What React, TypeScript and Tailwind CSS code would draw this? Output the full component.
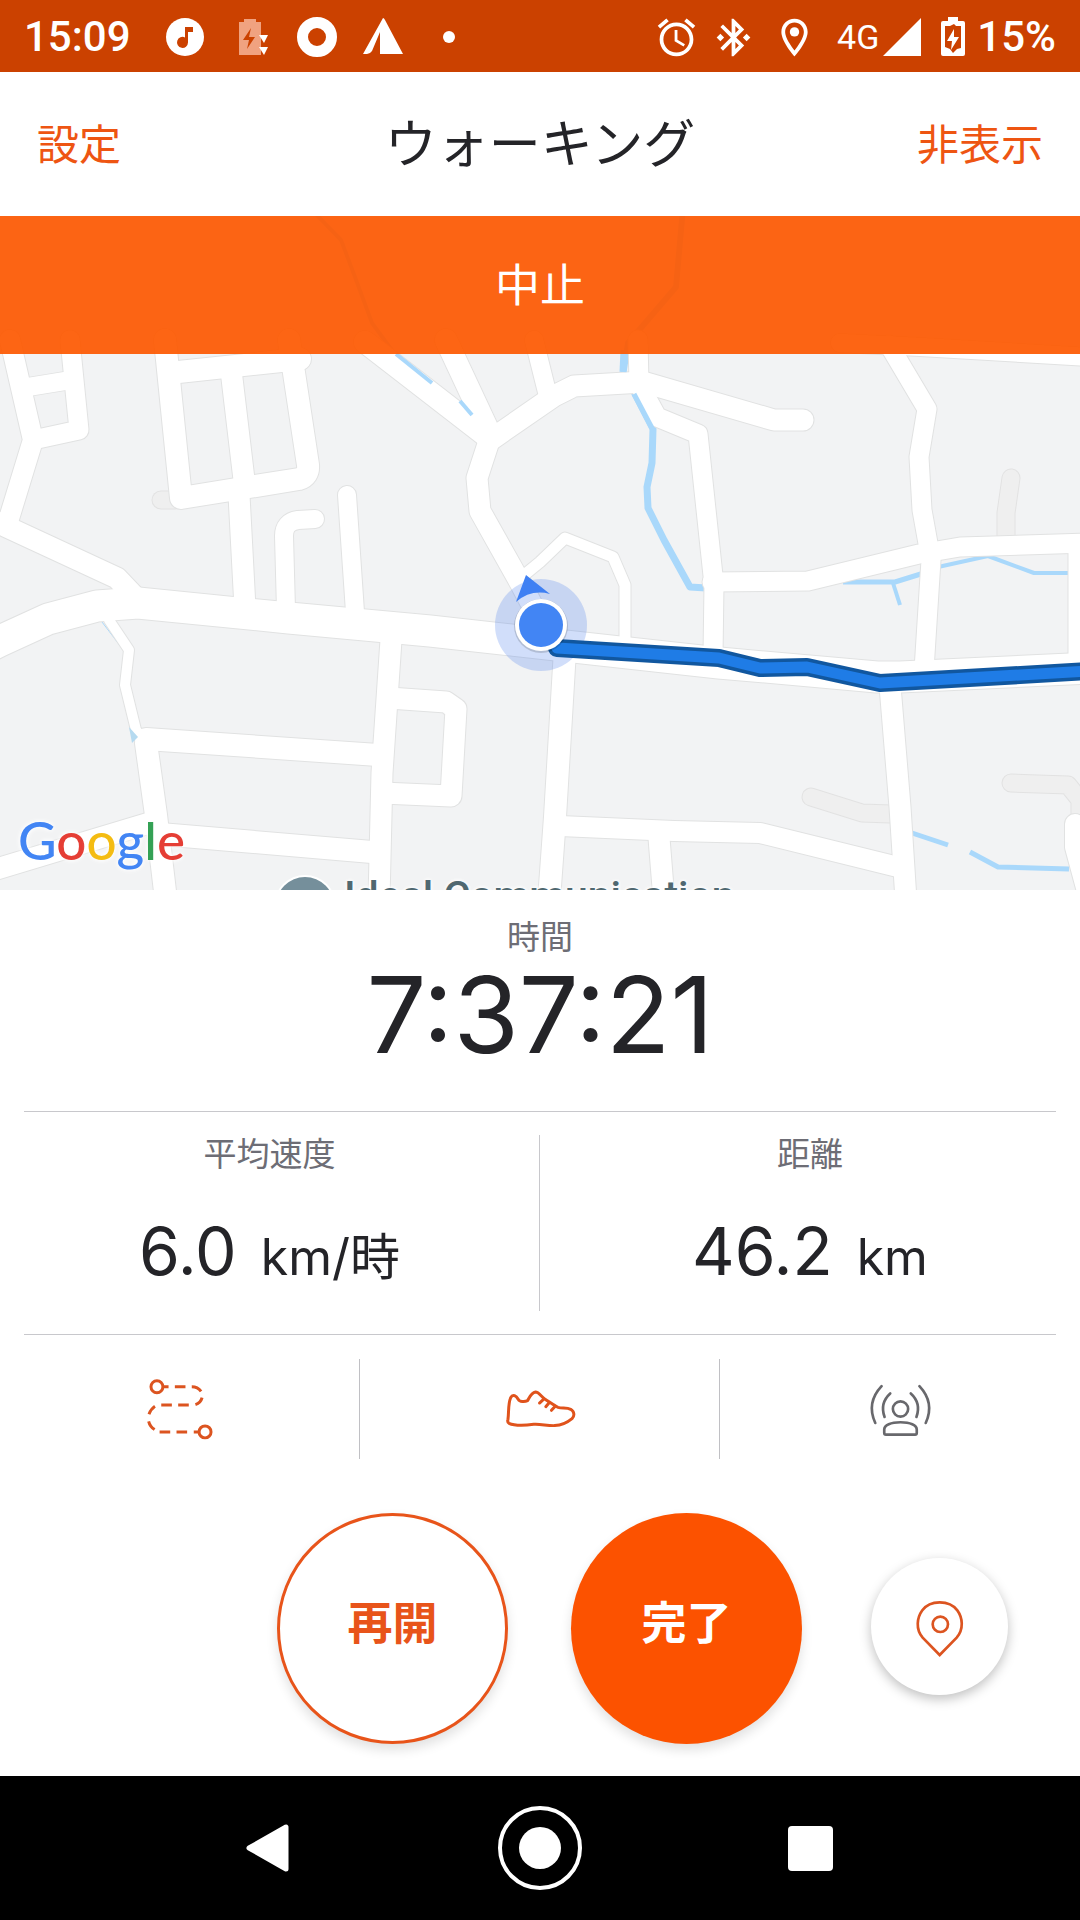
import type { ReactNode } from "react";
import { MdAlarm, MdBluetoothConnected, MdOutlineLocationOn } from "react-icons/md";

type Road = { d: string; w: number };

const roads: Road[] = [
  // main road
  { d: "M-10 646 L0 641 L48 619 L97 606 L138 603 L289 618 L430 631 L574 647 L719 663 L877 677 L900 677 L1090 668", w: 31 },
  // north west
  { d: "M10 340 L33 440 L7 525", w: 20 },
  { d: "M-10 519 L7 527 L117 578 L136 598", w: 21 },
  { d: "M28 387 L71 380", w: 18 },
  { d: "M70 340 L79 430 L33 440", w: 19 },
  { d: "M165 340 L181 498 L299 479 Q309 476 308 465 L289 340", w: 22 },
  { d: "M169 373 L300 359", w: 22 },
  { d: "M231 370 L245 488", w: 21 },
  { d: "M239 495 L245 608", w: 21 },
  { d: "M315 519 L298 520 Q284 522 284 536 L286 610", w: 18 },
  { d: "M347 495 L355 612", w: 18 },
  { d: "M365 342 L489 438", w: 22 },
  { d: "M446 340 L489 432", w: 22 },
  { d: "M490 438 L477 478 L480 511 L522 586 L540 620", w: 21 },
  { d: "M489 441 L554 396 L574 386 L643 382 L774 420 L803 420", w: 21 },
  { d: "M534 340 L547 392", w: 18 },
  { d: "M638 340 L639 384 L657 417 L698 434 L714 585 L713 655", w: 19 },
  { d: "M518 580 L540 562 L565 538 L613 557 L625 585 L625 645", w: 11 },
  // north east
  { d: "M840 343 L920 347 L1090 357", w: 18 },
  { d: "M889 345 L927 409 L919 457 L922 510 L931 560 L924 670", w: 19 },
  { d: "M712 582 L808 581 L919 554 L960 547 L1090 543", w: 19 },
  { d: "M1077 546 L1077 662", w: 17 },
  // south west
  { d: "M109 620 L129 650 L125 685 L136 730 L146 743", w: 10 },
  { d: "M146 743 L156 815 L166 900", w: 22 },
  { d: "M146 739 L378 755", w: 22 },
  { d: "M160 834 L372 852", w: 22 },
  { d: "M-10 871 L156 821", w: 21 },
  { d: "M391 640 L382 773 L379 900", w: 21 },
  { d: "M389 698 L446 702 L456 709 L451 796 L382 793", w: 21 },
  // south east
  { d: "M565 650 L555 817 L549 900", w: 22 },
  { d: "M560 826 L674 831 L760 833 L898 867", w: 20 },
  { d: "M659 838 L664 900", w: 21 },
  { d: "M890 686 L900 807 L906 900", w: 21 },
  { d: "M1075 824 L1075 847 L1088 895", w: 20 },
];

const lanes = [
  "M161 500 L175 500",
  "M1011 478 L1006 513 L1006 540",
  "M811 797 L862 813 L890 814",
  "M1011 783 L1068 785 L1080 800 L1080 820",
];

const rivers: Road[] = [
  { d: "M310 208 L341 240 L355 277 L372 323 L394 353 L432 383", w: 4 },
  { d: "M683 208 L676 287 L628 343 L623 376", w: 6 },
  { d: "M634 392 L653 429 L652 463 L647 487 L648 508 L664 540 L690 587 L706 588", w: 7 },
  { d: "M843 582 L895 582 L924 573", w: 5 },
  { d: "M893 583 L900 605", w: 4 },
  { d: "M938 567 L988 556 L1034 573 L1069 573", w: 4 },
  { d: "M912 833 L948 845", w: 5 },
  { d: "M970 852 L998 867 L1069 869", w: 5 },
  { d: "M102 622 L128 656", w: 1 },
];

// stretches of water that run on top of the road outlines
const openWater: Road[] = [
  { d: "M396 354 L432 383", w: 4 },
  { d: "M460 401 L472 415", w: 4 },
  { d: "M624 350 L623 372", w: 7 },
  { d: "M634 394 L653 430", w: 5 },
];

const route = "M557 648 L719 658 L760 668 L807 667 L880 683 L1090 671";

function RoadMap() {
  return (
    <svg
      aria-hidden="true"
      viewBox="0 216 1080 674"
      preserveAspectRatio="xMidYMid slice"
      className="absolute inset-0 h-full w-full bg-[#f2f3f4]"
      fill="none"
    >
      {lanes.map((d) => (
        <g key={d} strokeLinecap="round" strokeLinejoin="round">
          <path d={d} stroke="#e2e2e2" strokeWidth="19" />
          <path d={d} stroke="#efefef" strokeWidth="17" />
        </g>
      ))}
      {rivers.map((r) => (
        <path key={r.d} d={r.d} stroke="#a9d8fb" strokeWidth={r.w} strokeLinejoin="round" />
      ))}
      {roads.map((r) => (
        <path key={r.d} d={r.d} stroke="#e1e2e2" strokeWidth={r.w + 2} strokeLinecap="round" strokeLinejoin="round" />
      ))}
      {roads.map((r) => (
        <path key={r.d} d={r.d} stroke="#fff" strokeWidth={r.w} strokeLinecap="round" strokeLinejoin="round" />
      ))}
      <path d="M129 727 L138 737 L132 743Z" fill="#b5daf0" />
      {openWater.map((r) => (
        <path key={r.d} d={r.d} stroke="#a9d8fb" strokeWidth={r.w} />
      ))}

      <circle cx="541" cy="625" r="46" fill="#4f80ea" fillOpacity="0.26" />
      <path d={route} stroke="#11579f" strokeWidth="18" strokeLinejoin="round" strokeLinecap="round" />
      <path d={route} stroke="#1f7ce6" strokeWidth="11" strokeLinejoin="round" strokeLinecap="round" />
      <path d="M526 575 L550 594 Q531 589 516 602Z" fill="#3f80f3" />
      <circle cx="541" cy="626" r="27" fill="#000" fillOpacity="0.15" />
      <circle cx="541" cy="625" r="26" fill="#fff" />
      <circle cx="541" cy="625" r="22" fill="#4285f4" />
      <circle cx="305" cy="906" r="31" fill="#fff" />
      <circle cx="305" cy="906" r="29" fill="#758f9b" />
    </svg>
  );
}

function StatusCell({ children }: { children: ReactNode }) {
  return <span className="flex w-[66px] shrink-0 items-center justify-center">{children}</span>;
}

function StatusBar() {
  return (
    <div className="flex h-[72px] items-center bg-[#cb4100] px-6 pt-0.5 font-[Roboto,sans-serif] text-[42px] leading-[48px] font-medium text-white">
      <span className="w-32">15:09</span>
      <StatusCell>
        <svg width="38" height="38" viewBox="0 0 38 38">
          <circle cx="19" cy="19" r="19" fill="#fff" />
          <path d="M19 9h8v5h-5v10.500a5.500 5.500 0 1 1-3-5z" fill="#cb4100" />
        </svg>
      </StatusCell>
      <StatusCell>
        <svg width="36" height="38" viewBox="0 0 36 38">
          <path d="M6 4h5V1h12v3h5v33H6z" fill="#f0a280" />
          <path d="M18 10 10 22h6l-2 9 8-12h-6z" fill="#cb4100" />
          <path d="M26 17h9l-4 8zM26 29h9l-4 8z" fill="#fff" />
        </svg>
      </StatusCell>
      <StatusCell>
        <svg width="40" height="40" viewBox="0 0 40 40">
          <circle cx="20" cy="20" r="14.500" fill="none" stroke="#fff" strokeWidth="11" />
        </svg>
      </StatusCell>
      <StatusCell>
        <svg width="40" height="38" viewBox="0 0 40 38">
          <path d="M20 0 Q21 0 22 2 L40 36 H17 V14 L9 33 Q7 36 4 36 H0 Z" fill="#fff" />
        </svg>
      </StatusCell>
      <StatusCell>
        <svg width="12" height="12" viewBox="0 0 12 12">
          <circle cx="6" cy="6" r="6" fill="#fff" />
        </svg>
      </StatusCell>
      <div className="ml-auto flex items-center">
        <MdAlarm size={45} />
        <MdBluetoothConnected size={45} className="ml-3" />
        <MdOutlineLocationOn size={45} className="ml-4" />
        <span className="ml-5 text-[34px] font-normal">4G</span>
        <svg width="38" height="38" viewBox="0 0 38 38" className="ml-1">
          <path d="M38 0v38H0z" fill="#fff" />
        </svg>
        <svg width="24" height="40" viewBox="0 0 24 40" className="mr-3 ml-5">
          <path d="M7 0h10v4h5q2 0 2 2v31q0 2-2 2H2q-2 0-2-2V6q0-2 2-2h5z" fill="#fff" />
          <path d="M4 9h5l4-2 2 2h5v22l-4 1-4 4-3-4-5-2z" fill="#cb4100" />
          <path d="M13 12 6 24h5l-1 9 8-13h-5z" fill="#fff" />
        </svg>
        <span>15%</span>
      </div>
    </div>
  );
}

function Stat({ label, value, unit }: { label: string; value: string; unit: string }) {
  return (
    <div className="flex h-44 flex-col items-center">
      <span className="text-[33px] leading-[34px] text-[#6d6d75]">{label}</span>
      <p className="mt-11 font-[Inter,'Noto_Sans_CJK_JP',sans-serif] text-[66px] leading-[76px] whitespace-nowrap text-[#242428]">
        {value}
        <span className="ml-6 text-[50px]">{unit}</span>
      </p>
    </div>
  );
}

function RouteIcon() {
  return (
    <svg width="73" height="70" viewBox="130 100 220 210" fill="none" stroke="#dc5420" strokeWidth="9" strokeLinecap="butt">
      <circle cx="172" cy="138" r="18" />
      <circle cx="317" cy="274" r="18" />
      <path d="M190 138h17M226 138h32M277 138q18 0 28 14M308 171q-4 16-20 21M268 193h-32M217 193h-32M166 197q-12 8-18 24M147 242q4 16 18 25M180 274h32M231 274h32M283 274h16" />
    </svg>
  );
}

function ShoeIcon() {
  return (
    <svg width="73" height="70" viewBox="1210 102 220 210" fill="none" stroke="#e0531c" strokeWidth="9" strokeLinecap="round" strokeLinejoin="round">
      <path d="M1225 238 C1228 215 1225 192 1233 173 C1240 160 1250 168 1256 178 C1260 186 1276 186 1284 182 C1290 172 1295 158 1308 156 C1318 156 1326 170 1336 177 C1350 186 1366 198 1376 202 C1388 206 1402 202 1414 208 C1426 215 1426 228 1418 236 C1406 246 1390 256 1366 257 C1345 258 1325 252 1305 253 C1280 256 1250 260 1228 250 C1222 246 1224 242 1225 238Z" />
      <path d="M1332 178l-12 11M1349 188l-10 12M1366 200l-10 11" />
    </svg>
  );
}

function BeaconIcon() {
  return (
    <svg width="73" height="70" viewBox="790 102 220 210" fill="none" stroke="#68686c" strokeWidth="8" strokeLinecap="round" strokeLinejoin="round">
      <circle cx="900" cy="207" r="23" />
      <path d="M856 284q-5 0-5-5v-10c0-14 20-22 49-22s49 8 49 22v10q0 5-5 5z" />
      <path d="M843 138c-30 32-38 70-19 111M957 138c30 32 38 70 19 111M869 160c-22 20-26 46-17 71M931 160c22 20 26 46 17 71" />
    </svg>
  );
}

const tabs = [
  { label: "ルート", icon: <RouteIcon /> },
  { label: "ウォーキング", icon: <ShoeIcon /> },
  { label: "Beacon", icon: <BeaconIcon /> },
];

export default function App() {
  return (
    <div className="flex min-h-screen flex-col bg-white font-['Noto_Sans_CJK_JP',sans-serif]">
      <StatusBar />

      <header className="grid h-36 grid-cols-[1fr_auto_1fr] items-center px-[37px] pb-1">
        <button className="justify-self-start text-[42px] leading-[48px] text-[#ee5512]">設定</button>
        <h1 className="pb-0.5 text-[52px] leading-[56px] text-[#242428]">ウォーキング</h1>
        <button className="justify-self-end text-[42px] leading-[48px] text-[#ee5512]">非表示</button>
      </header>

      <section className="relative min-h-[400px] flex-1 overflow-hidden">
        <RoadMap />
        <button className="absolute inset-x-0 top-0 h-[138px] bg-[#fd5800]/92 pb-1 text-[45px] text-white">中止</button>
        <span className="absolute bottom-[18px] left-[18px] font-[Lato,sans-serif] text-[53px] leading-[64px] font-medium text-[#4285f4] [text-shadow:0_0_4px_#fff,0_0_6px_#fff]">
          G<span className="text-[#e53e35]">o</span>
          <span className="text-[#f4bc12]">o</span>g<span className="text-[#34a155]">l</span>
          <span className="text-[#e53e35]">e</span>
        </span>
        <span className="absolute -bottom-[30px] left-[344px] font-[Roboto,sans-serif] text-[41px] leading-[48px] font-medium whitespace-nowrap text-[#506870] [text-shadow:0_0_4px_#fff,0_0_4px_#fff]">
          Ideal Communication
        </span>
      </section>

      <section className="flex flex-col items-center px-6 pt-[27px]">
        <span className="text-[33px] leading-9 text-[#6d6d75]">時間</span>
        <p className="mt-[10px] mb-11 font-[Inter,sans-serif] text-[106px] leading-[104px] text-[#242428]">7:37:21</p>
      </section>

      <hr className="mx-6 border-[#c8c8cc]" />
      <section className="grid grid-cols-2 divide-x divide-[#c8c8cc] py-[23px]">
        <Stat label="平均速度" value="6.0" unit="km/時" />
        <Stat label="距離" value="46.2" unit="km" />
      </section>
      <hr className="mx-6 border-[#c8c8cc]" />

      <nav className="grid grid-cols-3 divide-x divide-[#c0c0c4] py-6">
        {tabs.map((tab) => (
          <button key={tab.label} aria-label={tab.label} className="flex h-[100px] items-center justify-center">
            {tab.icon}
          </button>
        ))}
      </nav>

      <section className="flex items-center justify-end pt-[30px] pr-[72px] pb-8">
        <div className="mr-[69px] flex gap-[63px]">
          <button className="size-[231px] rounded-full border-3 border-[#e8541a] bg-white pb-4 text-[45px] font-bold text-[#e8541a] shadow-[0_6px_12px_rgba(0,0,0,0.12)]">
            再開
          </button>
          <button className="size-[231px] rounded-full bg-[#fc5200] pb-4 text-[45px] font-bold text-white shadow-[0_6px_12px_rgba(0,0,0,0.12)]">
            完了
          </button>
        </div>
        <button
          aria-label="現在地"
          className="mb-1 flex size-[137px] items-center justify-center rounded-full bg-white shadow-[0_4px_12px_rgba(0,0,0,0.25)]"
        >
          <svg width="56" height="64" viewBox="934 762 168 192" fill="none" stroke="#dc5420" strokeWidth="8">
            <path d="M1017 942 L966 890 C944 864 949 830 965 808 C988 776 1046 776 1070 808 C1086 830 1090 864 1068 890Z" />
            <circle cx="1019" cy="850" r="23" />
          </svg>
        </button>
      </section>

      <footer className="grid h-36 grid-cols-3 items-center justify-items-center bg-black px-[12.5%]">
        <button aria-label="戻る">
          <svg width="50" height="50" viewBox="0 0 50 50">
            <path d="M41 4v42L4 25z" fill="#fff" stroke="#fff" strokeWidth="5" strokeLinejoin="round" />
          </svg>
        </button>
        <button aria-label="ホーム" className="flex size-[84px] items-center justify-center rounded-full border-4 border-white">
          <span className="size-[42px] rounded-full bg-white" />
        </button>
        <button aria-label="アプリ履歴" className="size-[45px] rounded-sm bg-white" />
      </footer>
    </div>
  );
}
